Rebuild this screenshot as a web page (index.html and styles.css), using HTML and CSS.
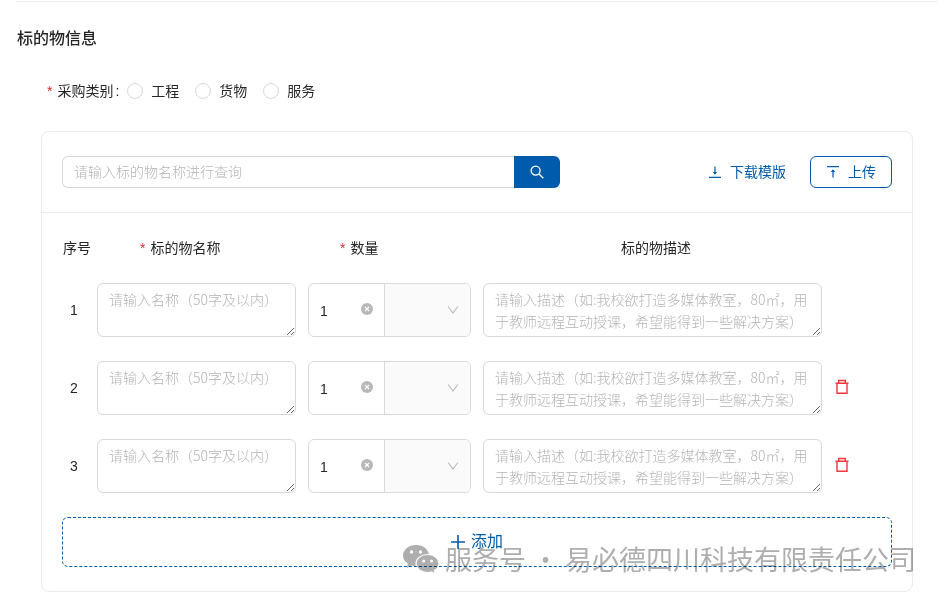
FILE: index.html
```
<!DOCTYPE html>
<html lang="zh-CN">
<head>
    <meta charset="UTF-8">
    <meta name="viewport" content="width=device-width, initial-scale=1.0">
    <title>标的物信息</title>
    <link rel="stylesheet" href="styles.css">
</head>
<body>

    <!-- 图标 -->
    <svg class="sprite" aria-hidden="true">
        <symbol id="icon-clear" viewBox="0 0 12 12">
            <circle cx="6" cy="6" r="6" fill="#b8b8b8"/>
            <path d="M4 4l4 4M8 4l-4 4" stroke="#fff" stroke-width="1.2"/>
        </symbol>
        <symbol id="icon-down" viewBox="0 0 12 12">
            <path d="M1.200 2.500l4.800 6.500 4.800-6.500" fill="none" stroke="#b8b8b8" stroke-width="1.1"/>
        </symbol>
        <symbol id="icon-delete" viewBox="0 0 16 16">
            <path d="M1.500 4.200h13M4.700 4V1.500h6.600V4M3 4.200V14.200h10V4.200" fill="none" stroke="currentColor" stroke-width="1.4"/>
        </symbol>
    </svg>

    <main class="page">
        <h2 class="title">标的物信息</h2>

        <div class="category" role="radiogroup" aria-labelledby="category-label">
            <span class="category-label required" id="category-label">采购类别<span class="colon">:</span></span>
            <label class="radio"><input type="radio" name="category" value="1">工程</label>
            <label class="radio"><input type="radio" name="category" value="2">货物</label>
            <label class="radio"><input type="radio" name="category" value="3">服务</label>
        </div>

        <section class="card">
            <div class="toolbar">
                <form class="search">
                    <input type="text" class="search-input" placeholder="请输入标的物名称进行查询" aria-label="标的物名称">
                    <button type="button" class="search-button" aria-label="查询">
                        <svg width="14" height="14" viewBox="0 0 14 14" fill="none" stroke="currentColor" stroke-width="1.3">
                            <circle cx="5.6" cy="5.6" r="4.5"/>
                            <path d="M9 9l4.3 4.3"/>
                        </svg>
                    </button>
                </form>
                <div class="actions">
                    <a class="download" href="#">
                        <svg width="12" height="14" viewBox="0 0 12 14" fill="none" stroke="currentColor" stroke-width="1.2">
                            <path d="M6 1.5v7M0 12.4h12"/>
                            <path d="M3.8 7h4.4L6 9.8z" fill="currentColor" stroke="none"/>
                        </svg>
                        下载模版
                    </a>
                    <button type="button" class="upload">
                        <svg width="12" height="14" viewBox="0 0 12 14" fill="none" stroke="currentColor" stroke-width="1.2">
                            <path d="M6 12.5v-7M0 1.6h12"/>
                            <path d="M3.8 7h4.4L6 4.2z" fill="currentColor" stroke="none"/>
                        </svg>
                        上传
                    </button>
                </div>
            </div>

            <div class="content">
                <table class="items">
                    <thead>
                        <tr>
                            <th class="index-column">序号</th>
                            <th class="name-column"><span class="required">标的物名称</span></th>
                            <th class="count-column"><span class="required">数量</span></th>
                            <th class="desc-column">标的物描述</th>
                            <th class="action-column"></th>
                        </tr>
                    </thead>
                    <tbody>
                        <tr>
                            <td class="index">1</td>
                            <td><textarea class="field" placeholder="请输入名称（50字及以内）" aria-label="标的物名称"></textarea></td>
                            <td>
                                <div class="count">
                                    <input type="text" class="count-input" value="1" aria-label="数量">
                                    <button type="button" class="clear" aria-label="清除"><svg width="12" height="12"><use href="#icon-clear"/></svg></button>
                                    <div class="unit">
                                        <select class="unit-select" aria-label="单位"><option></option></select>
                                        <svg class="unit-arrow" width="12" height="12"><use href="#icon-down"/></svg>
                                    </div>
                                </div>
                            </td>
                            <td><textarea class="field desc" placeholder="请输入描述（如:我校欲打造多媒体教室，80㎡，用于教师远程互动授课，希望能得到一些解决方案）" aria-label="标的物描述"></textarea></td>
                            <td></td>
                        </tr>
                        <tr>
                            <td class="index">2</td>
                            <td><textarea class="field" placeholder="请输入名称（50字及以内）" aria-label="标的物名称"></textarea></td>
                            <td>
                                <div class="count">
                                    <input type="text" class="count-input" value="1" aria-label="数量">
                                    <button type="button" class="clear" aria-label="清除"><svg width="12" height="12"><use href="#icon-clear"/></svg></button>
                                    <div class="unit">
                                        <select class="unit-select" aria-label="单位"><option></option></select>
                                        <svg class="unit-arrow" width="12" height="12"><use href="#icon-down"/></svg>
                                    </div>
                                </div>
                            </td>
                            <td><textarea class="field desc" placeholder="请输入描述（如:我校欲打造多媒体教室，80㎡，用于教师远程互动授课，希望能得到一些解决方案）" aria-label="标的物描述"></textarea></td>
                            <td><button type="button" class="delete" aria-label="删除"><svg width="16" height="16"><use href="#icon-delete"/></svg></button></td>
                        </tr>
                        <tr>
                            <td class="index">3</td>
                            <td><textarea class="field" placeholder="请输入名称（50字及以内）" aria-label="标的物名称"></textarea></td>
                            <td>
                                <div class="count">
                                    <input type="text" class="count-input" value="1" aria-label="数量">
                                    <button type="button" class="clear" aria-label="清除"><svg width="12" height="12"><use href="#icon-clear"/></svg></button>
                                    <div class="unit">
                                        <select class="unit-select" aria-label="单位"><option></option></select>
                                        <svg class="unit-arrow" width="12" height="12"><use href="#icon-down"/></svg>
                                    </div>
                                </div>
                            </td>
                            <td><textarea class="field desc" placeholder="请输入描述（如:我校欲打造多媒体教室，80㎡，用于教师远程互动授课，希望能得到一些解决方案）" aria-label="标的物描述"></textarea></td>
                            <td><button type="button" class="delete" aria-label="删除"><svg width="16" height="16"><use href="#icon-delete"/></svg></button></td>
                        </tr>
                    </tbody>
                </table>

                <button type="button" class="add">
                    <svg width="14" height="14" viewBox="0 0 14 14" stroke="currentColor" stroke-width="1.6"><path d="M7 0v14M0 7h14"/></svg>
                    添加
                </button>
            </div>
        </section>
    </main>

    <div class="watermark">
        <svg width="36" height="30" viewBox="0 0 36 30">
            <path d="M13 1C5.800 1 0 5.700 0 11.600c0 3.400 1.900 6.300 4.900 8.200L3.700 24l4.800-2.500c1.500.4 3 .6 4.500.6 7.200 0 13-4.700 13-10.500S20.200 1 13 1z" fill="#aeaeae"/>
            <path d="M24.500 10.500c-6.400 0-11.500 4-11.500 9s5.100 9 11.500 9c1.400 0 2.700-.2 3.900-.5l4 2-1-3.400c2.800-1.700 4.600-4.200 4.600-7.100 0-5-5.100-9-11.500-9z" fill="#aeaeae" stroke="#fff" stroke-width="1.200"/>
            <g fill="#fff">
                <circle cx="8.500" cy="8" r="1.700"/>
                <circle cx="17.500" cy="8" r="1.700"/>
                <circle cx="20.700" cy="17" r="1.500"/>
                <circle cx="28.500" cy="17" r="1.500"/>
            </g>
        </svg>
        服务号 · 易必德四川科技有限责任公司
    </div>

</body>
</html>
```
FILE: styles.css
```
* {
    box-sizing: border-box;
}

body {
    margin: 0;
    background-color: #fff;
    color: #262626;
    font-family: "Liberation Sans", "Noto Sans CJK SC", sans-serif;
    font-size: 14px;
    line-height: 22px;
}

button, input, select, textarea {
    font: inherit;
    color: inherit;
    margin: 0;
}

button {
    cursor: pointer;
}

svg {
    flex: none;
    display: block;
}

.sprite {
    position: absolute;
    width: 0;
    height: 0;
}

.page {
    margin: 1px 10px 0 16px;
    border-top: 1px solid #ebebeb;
    padding: 25px 24px 0 0;
}

.title {
    margin: 0 0 0 1px;
    font-size: 16px;
    line-height: 24px;
    font-weight: 500;
}

.required::before {
    content: "*";
    margin-right: 5px;
    color: #e0282e;
}

/* 采购类别 */
.category {
    display: flex;
    align-items: center;
    gap: 16px;
    margin: 29px 0 29px 31px;
}

.category-label {
    margin-right: -8px;
}

.colon {
    margin-left: 2px;
}

.radio {
    display: flex;
    align-items: center;
    gap: 8px;
}

.radio input {
    appearance: none;
    width: 16px;
    height: 16px;
    border: 1px solid #d9d9d9;
    border-radius: 50%;
}

.radio input:checked {
    border: 5px solid #005bac;
}

.card {
    margin-left: 25px;
    border: 1px solid #ebebeb;
    border-radius: 8px;
}

.toolbar {
    display: flex;
    justify-content: space-between;
    align-items: center;
    padding: 24px 20px;
    border-bottom: 1px solid #ebebeb;
}

.search {
    display: flex;
    width: 60%;
}

.search-input {
    flex: 1;
    min-width: 0;
    height: 32px;
    padding: 0 11px;
    border: 1px solid #d9d9d9;
    border-right: none;
    border-radius: 6px 0 0 6px;
}

.search-button {
    display: flex;
    align-items: center;
    justify-content: center;
    width: 46px;
    height: 32px;
    padding: 0;
    border: none;
    border-radius: 0 6px 6px 0;
    background-color: #005bac;
    color: #fff;
}

::placeholder {
    color: #b4b4b4;
    font-family: "Noto Sans CJK SC", sans-serif;
    font-weight: 300;
}

.actions {
    display: flex;
    align-items: center;
    gap: 24px;
    color: #005bac;
}

.download, .upload {
    display: flex;
    align-items: center;
    gap: 9px;
    color: inherit;
    text-decoration: none;
}

.upload {
    height: 32px;
    padding: 0 15px 0 16px;
    border: 1px solid #005bac;
    border-radius: 6px;
    background-color: #fff;
}

.content {
    padding: 24px 20px;
}

/* 标的物列表 */
.items {
    width: 100%;
    table-layout: fixed;
    border-collapse: collapse;
}

.items th {
    padding: 0 0 24px 1px;
    text-align: left;
    font-weight: normal;
    white-space: nowrap;
}

.items td {
    padding: 0 12px 24px 0;
    vertical-align: middle;
}

.items .index-column {
    width: 35px;
}

.items .name-column {
    width: 211px;
    padding-left: 43px;
}

.items .count-column {
    width: 175px;
    padding-left: 32px;
}

.items .desc-column {
    padding-left: 138px;
}

.items .action-column {
    width: 58px;
}

.items .index {
    padding-left: 8px;
    padding-right: 0;
}

.field {
    display: block;
    width: 100%;
    height: 54px;
    padding: 4px 11px;
    border: 1px solid #d9d9d9;
    border-radius: 6px;
    background-color: #fff;
    resize: vertical;
}

.desc {
    overflow-y: scroll;
}

.desc::-webkit-scrollbar {
    width: 12px;
}

.desc::-webkit-scrollbar-thumb {
    border: 2px solid #fff;
    border-radius: 6px;
    background-color: #dcdce6;
}

.count {
    display: flex;
    align-items: center;
    height: 54px;
    border: 1px solid #d9d9d9;
    border-radius: 6px;
    overflow: hidden;
}

.count-input {
    flex: 1;
    min-width: 0;
    padding: 2px 0 0 11px;
    border: none;
}

.clear {
    margin-right: 11px;
    padding: 0 0 2px;
    border: none;
    background: none;
}

.unit {
    position: relative;
    width: 86px;
    height: 100%;
    border-left: 1px solid #d9d9d9;
}

.unit-select {
    appearance: none;
    width: 100%;
    height: 100%;
    border: none;
    border-radius: 0;
    background-color: #fafafa;
}

.unit-arrow {
    position: absolute;
    top: 20px;
    right: 11px;
    pointer-events: none;
}

.delete {
    display: block;
    padding: 0 0 2px;
    border: none;
    background: none;
    color: #f0383e;
}

.add {
    display: flex;
    align-items: center;
    justify-content: center;
    gap: 6px;
    width: 100%;
    height: 50px;
    border: 1px dashed #005bac;
    border-radius: 6px;
    background-color: #fff;
    color: #005bac;
    font-size: 16px;
}

.watermark {
    position: absolute;
    top: 543px;
    right: 31px;
    display: flex;
    align-items: center;
    gap: 6px;
    color: #aeaeae;
    font-family: "Noto Sans CJK SC", sans-serif;
    font-size: 27px;
    line-height: 32px;
    white-space: nowrap;
    mix-blend-mode: multiply;
    pointer-events: none;
}
```
